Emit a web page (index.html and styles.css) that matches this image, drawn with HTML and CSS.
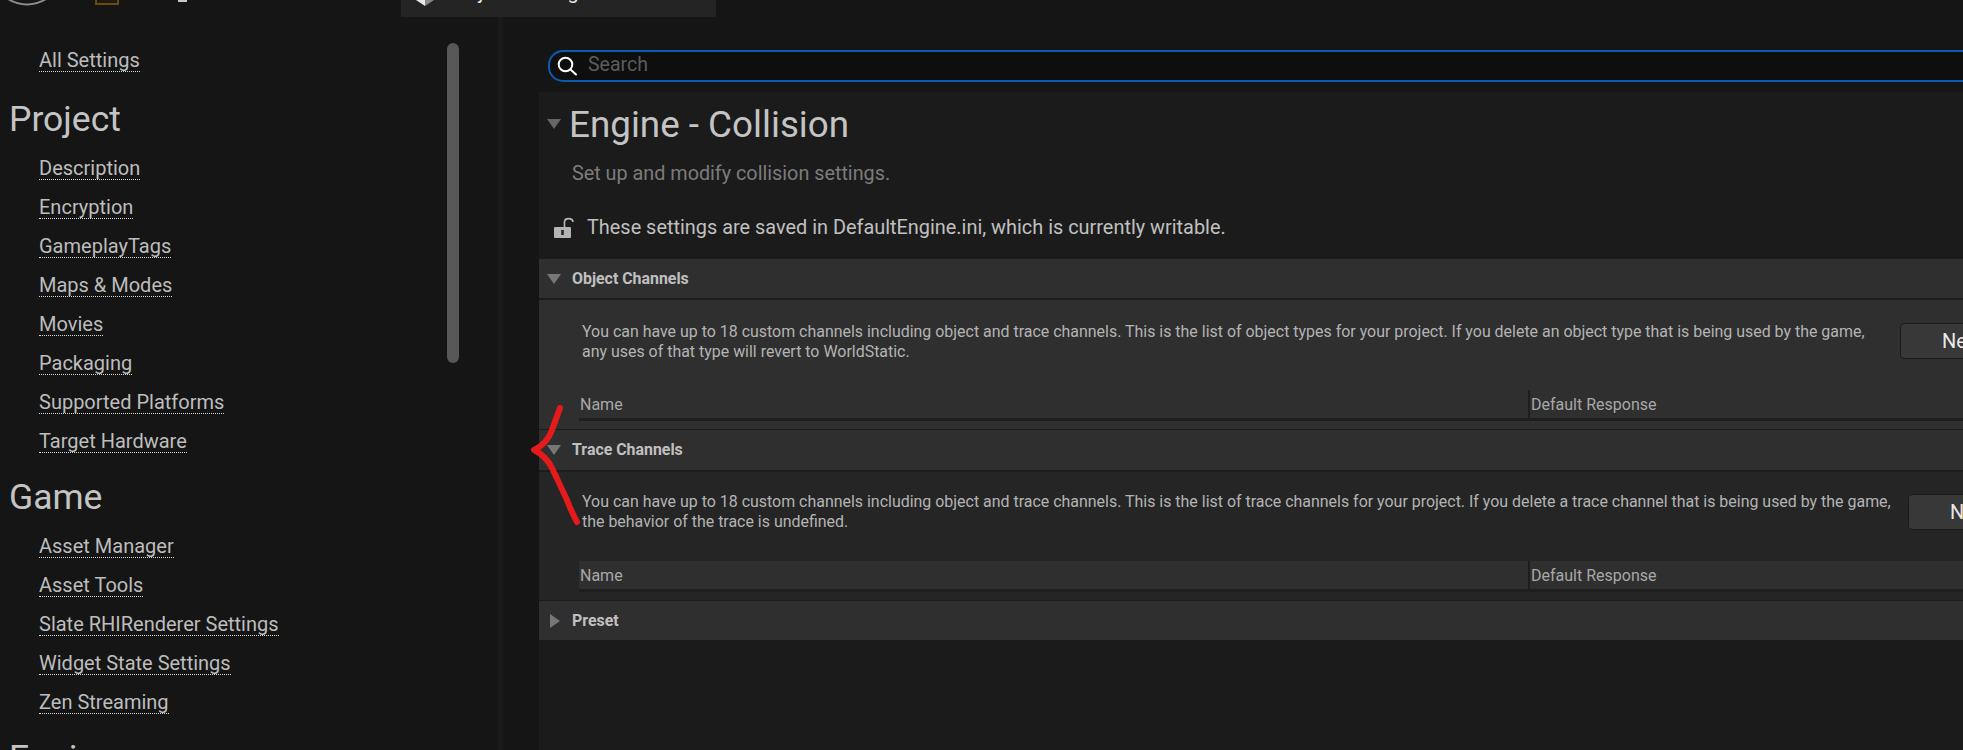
FILE: index.html
```html
<!DOCTYPE html>
<html lang="en">
<head>
<meta charset="utf-8">
<title>Project Settings</title>
<link rel="stylesheet" href="styles.css">
</head>
<body>
<div class="app">
  <header class="topbar">
    <svg class="logo" viewBox="0 0 40 6" width="40" height="6"><path d="M1 -1 A36 36 0 0 0 39 -1" fill="none" stroke="#8c8c8c" stroke-width="2"/></svg>
    <div class="folder"></div>
    <div class="dash"></div>
    <div class="tab">
      <svg class="tab-icon" viewBox="0 0 18 6" width="18" height="6"><path d="M0 0 L9 0 L9 6 Z" fill="#e8e8e8"/><path d="M9 0 L18 0 L9 6 Z" fill="#8a8a8a"/></svg>
      <span class="tab-title">Project Settings</span>
    </div>
  </header>
  <main class="main">
    <aside class="sidebar">
      <div class="track"><div class="thumb"></div></div>
      <nav class="nav">
        <div class="item top"><a class="link">All Settings</a></div>
        <h2 class="group first">Project</h2>
        <div class="item"><a class="link">Description</a></div>
        <div class="item"><a class="link">Encryption</a></div>
        <div class="item"><a class="link">GameplayTags</a></div>
        <div class="item"><a class="link">Maps &amp; Modes</a></div>
        <div class="item"><a class="link">Movies</a></div>
        <div class="item"><a class="link">Packaging</a></div>
        <div class="item"><a class="link">Supported Platforms</a></div>
        <div class="item"><a class="link">Target Hardware</a></div>
        <h2 class="group">Game</h2>
        <div class="item"><a class="link">Asset Manager</a></div>
        <div class="item"><a class="link">Asset Tools</a></div>
        <div class="item"><a class="link">Slate RHIRenderer Settings</a></div>
        <div class="item"><a class="link">Widget State Settings</a></div>
        <div class="item"><a class="link">Zen Streaming</a></div>
        <h2 class="group">Engine</h2>
      </nav>
    </aside>
    <div class="splitter"></div>
    <section class="content">
      <div class="search">
        <svg class="search-icon" viewBox="0 0 20 20" width="20" height="20"><circle cx="8.5" cy="8.5" r="6.8" fill="none" stroke="#fff" stroke-width="2"/><path d="M13.5 13.5 L19 18.5" stroke="#fff" stroke-width="2" stroke-linecap="round"/></svg>
        <span class="search-text">Search</span>
      </div>
      <div class="panel">
        <div class="title-row">
          <svg class="arrow dim" viewBox="0 0 14 10" width="14" height="10"><path d="M0 0 H14 L7 10 Z"/></svg>
          <h1 class="title">Engine - Collision</h1>
        </div>
        <p class="desc">Set up and modify collision settings.</p>
        <div class="lock-row">
          <svg class="lock" viewBox="0 0 20 21" width="20" height="21"><path d="M10.5 11 V5 C10.5 0.5 18.5 0.5 19 5" fill="none" stroke="#b5b5b5" stroke-width="1.7"/><rect x="0" y="10" width="17" height="11" rx="1" fill="#b5b5b5"/><rect x="7.2" y="13" width="2.6" height="5" fill="#2a2a2a"/></svg>
          <span class="lock-text">These settings are saved in DefaultEngine.ini, which is currently writable.</span>
        </div>

        <div class="sec-head">
          <svg class="arrow" viewBox="0 0 14 10" width="14" height="10"><path d="M0 0 H14 L7 10 Z"/></svg>
          <span class="sec-title">Object Channels</span>
        </div>
        <div class="sec-body object">
          <div class="msg-row">
            <p class="msg msg-object">You can have up to 18 custom channels including object and trace channels. This is the list of object types for your project. If you delete an object type that is being used by the game,<br>any uses of that type will revert to WorldStatic.</p>
            <button class="btn">New Object Channel...</button>
          </div>
          <div class="cols">
            <div class="col-name">Name</div>
            <div class="col-resp">Default Response</div>
          </div>
        </div>

        <div class="sec-head second">
          <svg class="arrow" viewBox="0 0 14 10" width="14" height="10"><path d="M0 0 H14 L7 10 Z"/></svg>
          <span class="sec-title">Trace Channels</span>
        </div>
        <div class="sec-body trace">
          <div class="msg-row">
            <p class="msg msg-trace">You can have up to 18 custom channels including object and trace channels. This is the list of trace channels for your project. If you delete a trace channel that is being used by the game,<br>the behavior of the trace is undefined.</p>
            <button class="btn">New Trace Channel...</button>
          </div>
          <div class="cols">
            <div class="col-name">Name</div>
            <div class="col-resp">Default Response</div>
          </div>
        </div>

        <div class="sec-head closed">
          <svg class="arrow" viewBox="0 0 14 14" width="14" height="14"><path d="M3 0 L13 7 L3 14 Z"/></svg>
          <span class="sec-title">Preset</span>
        </div>
      </div>
    </section>
  </main>
  <svg class="scribble" viewBox="0 0 1963 750" width="1963" height="750"><path d="M560 408 L552 430 Q547 444 534 450 Q546 456 552 468 Q561 487 567 500 Q572 513 577 522" fill="none" stroke="#e61a1a" stroke-width="6" stroke-linecap="round" stroke-linejoin="round"/></svg>
</div>
</body>
</html>
```
FILE: styles.css
```css
* { box-sizing: border-box; }
html, body { margin: 0; padding: 0; background: #151515; }
body { width: 1963px; height: 750px; overflow: hidden; font-family: Roboto, "Liberation Sans", sans-serif; color: #c0c0c0; }
.app { position: relative; width: 1963px; height: 750px; overflow: hidden; display: flex; flex-direction: column; }

.topbar { height: 17px; flex: none; display: flex; align-items: flex-start; background: #151515; }
.logo { margin-left: 7px; flex: none; }
.folder { margin-left: 48px; width: 24px; height: 5px; border: 2px solid #6b4a12; border-top: 0; background: #1e1a12; flex: none; }
.dash { margin-left: 59px; width: 9px; height: 2px; background: #c8c8c8; flex: none; }
.tab { margin-left: 214px; width: 315px; height: 17px; background: #242424; display: flex; overflow: hidden; padding-left: 15px; flex: none; }
.tab-icon { flex: none; }
.tab-title { margin-left: 14px; margin-top: -20px; font-size: 20px; line-height: 24px; color: #e6e6e6; white-space: nowrap; }

.main { flex: 1; display: flex; min-height: 0; }
.sidebar { width: 498px; flex: none; position: relative; padding: 30px 0 0 39px; overflow: hidden; }
.track { position: absolute; left: 447px; top: 26px; width: 12px; height: 320px; }
.thumb { width: 100%; height: 100%; background: #575757; border-radius: 6px; }
.nav { display: flex; flex-direction: column; align-items: flex-start; }
.item { height: 39px; flex: none; }
.item.top { height: 42px; }
.link { display: inline-block; height: 25px; font-size: 20px; line-height: 26px; color: #bdbdbd; border-bottom: 1px dotted #d8d8d8; white-space: nowrap; }
.group { margin: 0 0 6px -30px; height: 60px; flex: none; font-size: 35.5px; font-weight: 400; line-height: 60px; color: #c4c4c4; }

.splitter { width: 5px; flex: none; background: #1a1a1a; }
.content { flex: 1; min-width: 0; padding: 33px 0 0 36px; display: flex; flex-direction: column; overflow: hidden; }
.search { margin: 0 0 10px 9px; height: 32px; width: 1500px; flex: none; display: flex; align-items: center; padding: 0 0 3px 7px; background: #0e0e0e; border: 2px solid #0a5cb0; border-radius: 15px; }
.search-icon { flex: none; margin-top: 3px; }
.search-text { margin-left: 11px; font-size: 19.5px; color: #5c5c5c; }

.panel { flex: 1; background: #1b1b1b; }
.title-row { height: 64px; display: flex; align-items: center; padding-left: 8px; }
.arrow { flex: none; fill: #777; }
.arrow.dim { fill: #666; }
.title { margin: 0 0 0 8px; font-size: 36.8px; font-weight: 400; color: #c4c4c4; white-space: nowrap; }
.desc { margin: 0 0 0 33px; height: 36px; font-size: 19.8px; line-height: 36px; color: #7c7c7c; }
.lock-row { height: 67px; display: flex; align-items: center; padding: 3px 0 0 15px; }
.lock { flex: none; }
.lock-text { margin-left: 13px; font-size: 19.9px; color: #c0c0c0; white-space: nowrap; }

.sec-head { height: 41px; display: flex; align-items: center; padding-left: 8px; background: #2f2f2f; border-bottom: 2px solid #1c1c1c; }
.sec-head.second { height: 42px; padding-bottom: 1px; }
.sec-head.closed { height: 39px; border-bottom: 0; }
.sec-title { margin-left: 11px; font-size: 15.9px; font-weight: 700; color: #c0c0c0; }

.sec-body { border-bottom: 1px solid #1c1c1c; }
.sec-body.object { height: 130px; padding-top: 23px; background: #2f2f2f; }
.sec-body.trace { height: 129px; padding-top: 22px; background: #252525; }
.msg-row { height: 36px; display: flex; align-items: center; margin-left: 43px; width: 1600px; }
.msg { margin: 0; font-size: 15.95px; line-height: 20px; color: #b4b4b4; white-space: nowrap; flex: none; }
.msg-object { width: 1318px; padding-top: 1px; }
.msg-trace { width: 1326px; }
.btn { flex: none; width: 200px; height: 36px; padding: 0 0 0 41px; text-align: left; background: #383838; border: 1px solid #1a1a1a; border-radius: 4px; font-family: inherit; font-size: 20px; color: #e8e8e8; white-space: nowrap; overflow: hidden; }
.cols { margin: 31px 0 0 40px; height: 31px; display: flex; background: #2f2f2f; border-bottom: 3px solid #1e1e1e; font-size: 16px; line-height: 29px; color: #a8a8a8; }
.col-name { width: 949px; flex: none; padding-left: 1px; }
.col-resp { flex: 1; border-left: 2px solid #1e1e1e; padding-left: 1px; }

.scribble { position: absolute; left: 0; top: 0; pointer-events: none; }
```
